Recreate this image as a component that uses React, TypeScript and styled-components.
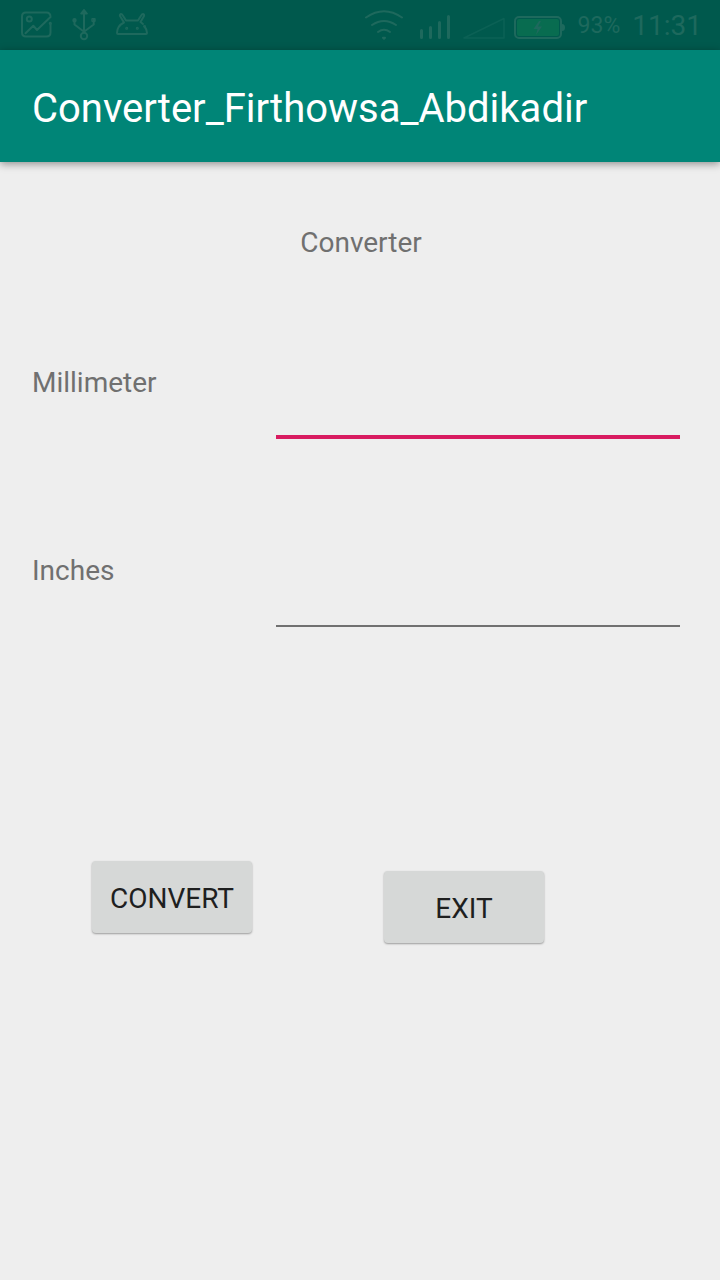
import React from 'react';
import styled, { createGlobalStyle } from 'styled-components';

const GlobalStyle = createGlobalStyle`
  * { box-sizing: border-box; }
  body {
    margin: 0;
    background: #eeeeee;
    font-family: Roboto, "Noto Sans", sans-serif;
  }
`;

const Page = styled.div`
  min-height: 100vh;
  background: #eeeeee;
`;

const StatusBar = styled.div`
  display: flex;
  align-items: center;
  justify-content: space-between;
  height: 50px;
  padding: 0 18px 0 20px;
  background: #00594d;
  color: #1e695d;
`;

const StatusGroup = styled.div<{ $gap: number }>`
  display: flex;
  align-items: center;
  gap: ${(p) => p.$gap}px;
`;

const StatusIcon = styled.svg`
  display: block;
  flex: none;
  fill: none;
  stroke: currentColor;
  stroke-width: 2;
  stroke-linecap: round;
  stroke-linejoin: round;
`;

const Percent = styled.span`
  padding: 2px 3px 0 0;
  font-size: 23px;
  line-height: 32px;
`;

const Clock = styled.time`
  padding-top: 2px;
  font-size: 28px;
  line-height: 32px;
`;

const AppBar = styled.header`
  position: relative;
  display: flex;
  align-items: center;
  height: 112px;
  padding: 6px 32px 0;
  background: #008577;
  box-shadow: 0 2px 8px rgba(0, 0, 0, 0.4);
`;

const AppTitle = styled.h1`
  margin: 0;
  color: #ffffff;
  font-size: 40px;
  font-weight: 400;
  line-height: 48px;
`;

const Form = styled.form`
  padding: 63px 40px 64px 32px;
`;

const Heading = styled.h2`
  margin: 0 0 104px;
  padding-left: 10px;
  color: #707070;
  font-size: 28px;
  font-weight: 400;
  line-height: 36px;
  text-align: center;
`;

const Field = styled.div`
  display: grid;
  grid-template-columns: 244px 1fr;
  height: 74px;
  margin-bottom: 114px;
`;

const Label = styled.label`
  color: #707070;
  font-size: 28px;
  line-height: 36px;
`;

const TextInput = styled.input<{ $active?: boolean }>`
  width: 100%;
  min-width: 0;
  height: 100%;
  padding: 0;
  border: 0;
  border-bottom: ${(p) => (p.$active ? '4px solid #d81b60' : '2px solid #707070')};
  border-radius: 0;
  outline: 0;
  background: transparent;
  color: #212121;
  font: inherit;
  font-size: 36px;
`;

const Actions = styled.div`
  display: flex;
  align-items: flex-start;
  gap: 132px;
  padding: 120px 0 0 60px;
`;

const Button = styled.button<{ $lowered?: boolean }>`
  width: 160px;
  height: 72px;
  margin: ${(p) => (p.$lowered ? '10px' : '0')} 0 0;
  padding: 4px 0 0;
  border: 0;
  border-radius: 4px;
  background: #d6d8d7;
  box-shadow: 0 1px 2px rgba(0, 0, 0, 0.35);
  color: #1e1f1f;
  font: inherit;
  font-size: 28px;
  line-height: 36px;
  text-transform: uppercase;
`;

const PictureIcon = () => (
  <StatusIcon width="32" height="28" viewBox="0 0 32 28" aria-hidden="true">
    <path d="M30.500 13v8.500q0 4-4 4H6q-4 0-4-4v-16q0-4 4-4h20.500q4 0 4 4.500L17 19l-3.700-4.300L5.500 22.300" />
    <circle cx="9.300" cy="8" r="2.500" />
    <circle cx="30.300" cy="12.300" r="0.600" fill="currentColor" />
  </StatusIcon>
);

const UsbIcon = () => (
  <StatusIcon width="24" height="32" viewBox="0 0 24 32" aria-hidden="true">
    <path d="M12 4v19.500M2.500 12v3.500L11 22M21.700 12v3.500L13 22" />
    <path d="M12 1l2.800 3.500H9.200z" fill="currentColor" />
    <circle cx="2.500" cy="11.300" r="1.200" fill="currentColor" />
    <path d="M20.200 9.500h3v3h-3z" fill="currentColor" strokeWidth="1" />
    <circle cx="12" cy="27" r="3.200" />
  </StatusIcon>
);

const AndroidIcon = () => (
  <StatusIcon width="32" height="24" viewBox="0 0 32 24" aria-hidden="true">
    <path d="M28.500 13.500q2.500 3 2.500 6.500 0 1-1 1H2q-1 0-1-1 0-7 7-10.500l-4-6.500q-.5-1.500 1-2 1 0 1.500 1L10 7.500h12L25.500 2q.5-1 1.500-1 1.500.5 1 2L24.500 9l2.500 2" />
    <circle cx="10.700" cy="15.300" r="0.500" fill="currentColor" />
    <circle cx="21.300" cy="15.300" r="0.500" fill="currentColor" />
    <circle cx="28.500" cy="13.300" r="0.400" fill="currentColor" />
  </StatusIcon>
);

const WifiIcon = () => (
  <StatusIcon width="40" height="30" viewBox="0 0 40 30" aria-hidden="true">
    <path d="M1 7.500q18-12.500 36 0M7 15q12-8 24 0M13 22q6-4.500 12 0" />
    <path d="M18 27.800h2l-1 1z" fill="currentColor" />
  </StatusIcon>
);

const SignalIcon = () => (
  <StatusIcon width="40" height="28" viewBox="0 0 40 28" aria-hidden="true">
    <path d="M7.500 19.500v7M16.500 16.500v10M25.500 11.500v15M34.500 5.500v21" strokeWidth="3" />
  </StatusIcon>
);

const EmptySignalIcon = () => (
  <StatusIcon width="42" height="28" viewBox="0 0 42 28" aria-hidden="true">
    <path d="M1 27L41 7.500V27z" stroke="#0b6155" strokeWidth="1.500" />
  </StatusIcon>
);

const BatteryIcon = () => (
  <StatusIcon width="55" height="28" viewBox="0 0 55 28" aria-hidden="true">
    <rect x="1" y="6" width="46" height="21" rx="4" />
    <rect x="3" y="8" width="42" height="17" rx="2" fill="#086c50" stroke="none" />
    <path d="M48 13q3 0 3 3.500T48 20z" fill="currentColor" stroke="none" />
    <path d="M25 10l-5.500 8h4l-1.500 6 6-8.500h-4l3-5.500z" fill="currentColor" stroke="none" />
  </StatusIcon>
);

export default function App() {
  return (
    <Page>
      <GlobalStyle />
      <StatusBar>
        <StatusGroup $gap={20}>
          <PictureIcon />
          <UsbIcon />
          <AndroidIcon />
        </StatusGroup>
        <StatusGroup $gap={9}>
          <WifiIcon />
          <SignalIcon />
          <EmptySignalIcon />
          <BatteryIcon />
          <Percent>93%</Percent>
          <Clock>11:31</Clock>
        </StatusGroup>
      </StatusBar>
      <AppBar>
        <AppTitle>Converter_Firthowsa_Abdikadir</AppTitle>
      </AppBar>
      <Form onSubmit={(event) => event.preventDefault()}>
        <Heading>Converter</Heading>
        <Field>
          <Label htmlFor="millimeter">Millimeter</Label>
          <TextInput id="millimeter" type="text" inputMode="decimal" $active />
        </Field>
        <Field>
          <Label htmlFor="inches">Inches</Label>
          <TextInput id="inches" type="text" inputMode="decimal" />
        </Field>
        <Actions>
          <Button type="submit">Convert</Button>
          <Button type="button" $lowered>Exit</Button>
        </Actions>
      </Form>
    </Page>
  );
}
